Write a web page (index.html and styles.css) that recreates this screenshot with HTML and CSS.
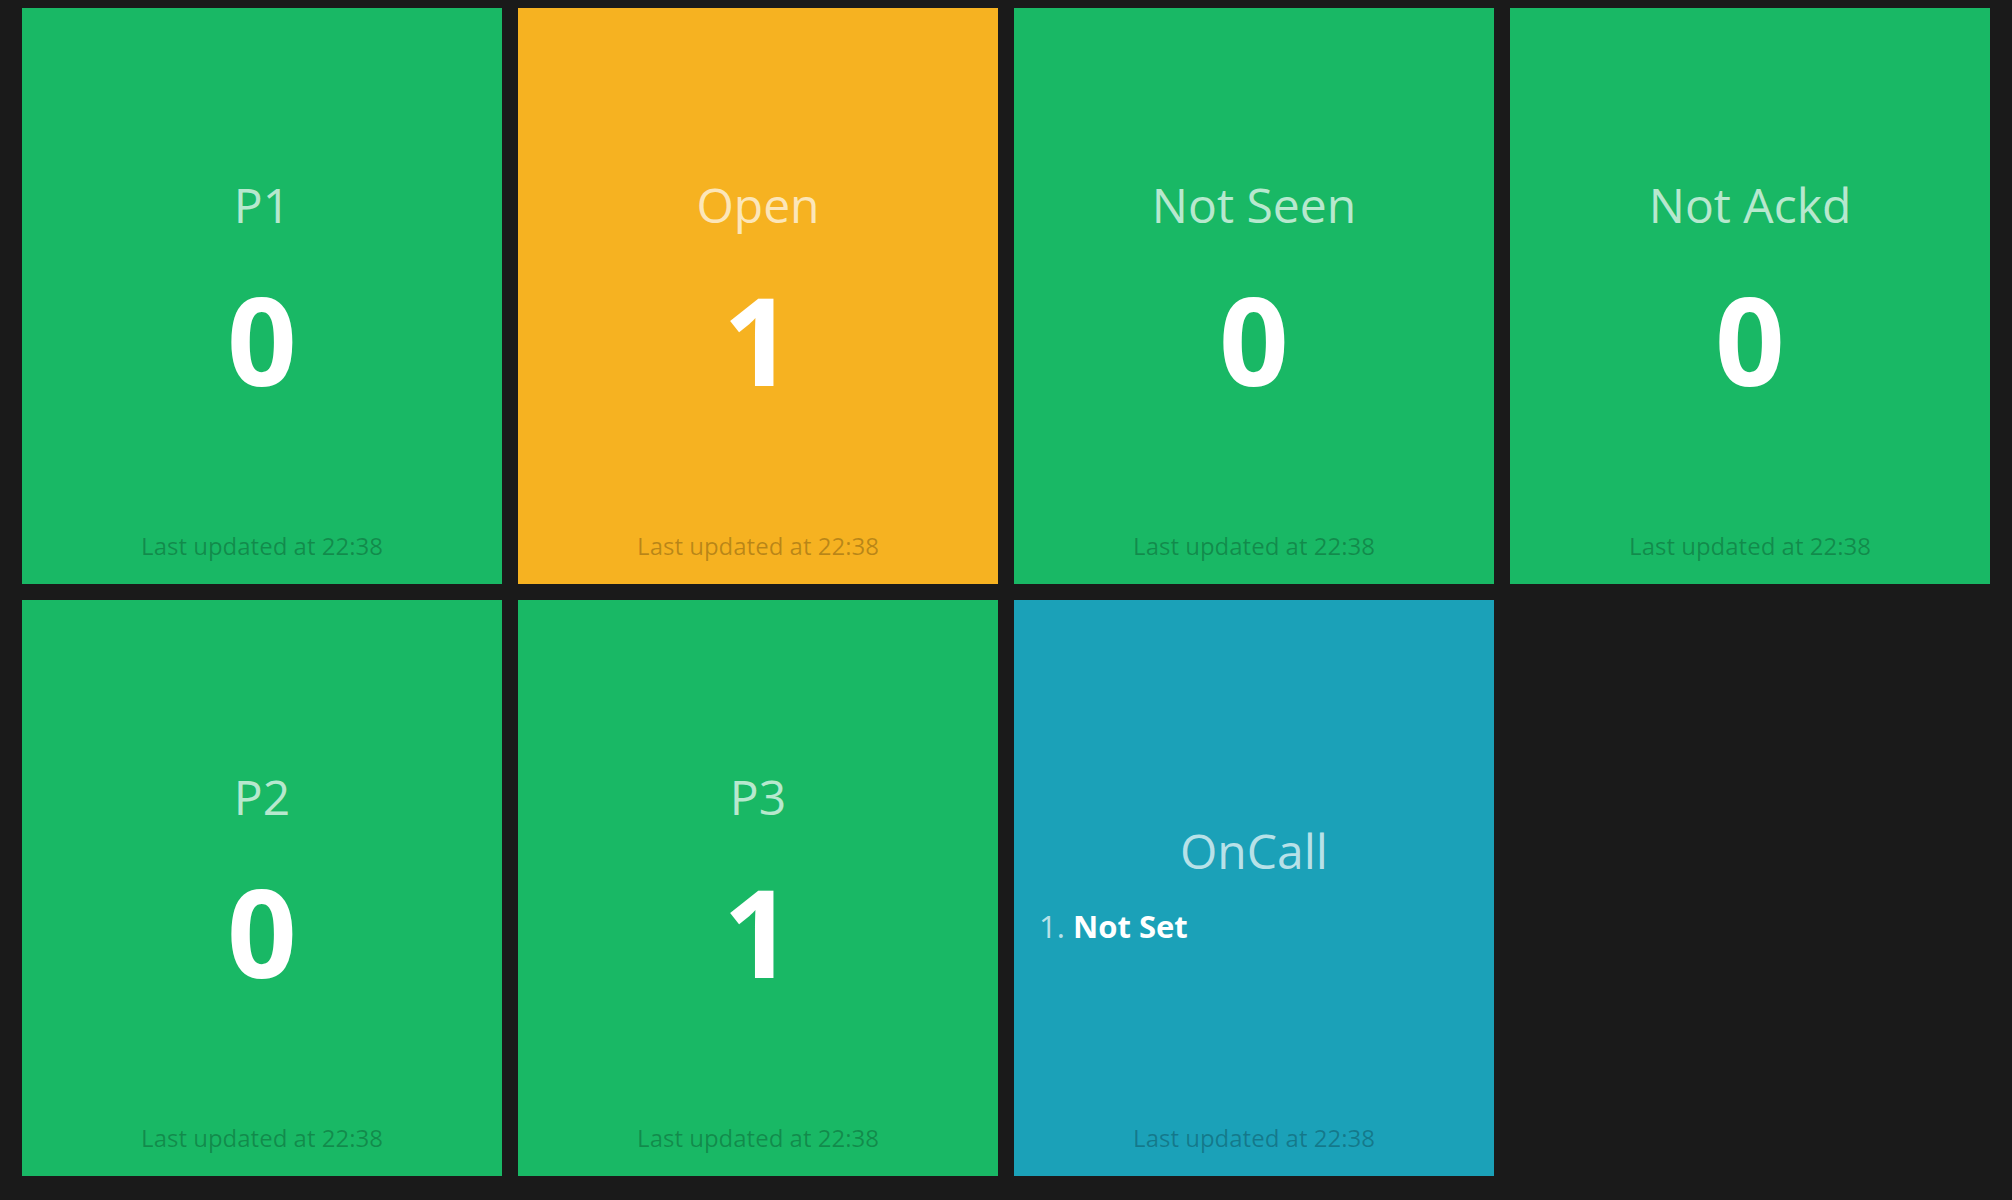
FILE: index.html
```html
<!DOCTYPE html>
<html>
<head>
<meta charset="utf-8">
<link rel="stylesheet" href="styles.css">
</head>
<body>
<div class="board">
  <div class="tile green">
    <div class="body"><div class="title">P1</div><div class="value">0</div></div>
    <div class="footer">Last updated at 22:38</div>
  </div>
  <div class="tile orange">
    <div class="body"><div class="title">Open</div><div class="value">1</div></div>
    <div class="footer">Last updated at 22:38</div>
  </div>
  <div class="tile green">
    <div class="body"><div class="title">Not Seen</div><div class="value">0</div></div>
    <div class="footer">Last updated at 22:38</div>
  </div>
  <div class="tile green">
    <div class="body"><div class="title">Not Ackd</div><div class="value">0</div></div>
    <div class="footer">Last updated at 22:38</div>
  </div>
  <div class="tile green">
    <div class="body"><div class="title">P2</div><div class="value">0</div></div>
    <div class="footer">Last updated at 22:38</div>
  </div>
  <div class="tile green">
    <div class="body"><div class="title">P3</div><div class="value">1</div></div>
    <div class="footer">Last updated at 22:38</div>
  </div>
  <div class="tile blue">
    <div class="body list-body">
      <div class="title">OnCall</div>
      <ol class="oncall"><li><span class="name">Not Set</span></li></ol>
    </div>
    <div class="footer">Last updated at 22:38</div>
  </div>
</div>
</body>
</html>
```
FILE: styles.css
```css
html, body {
  margin: 0;
  padding: 0;
  background: #1a1a1a;
  height: 1200px;
  overflow: hidden;
  font-family: "Open Sans", "Noto Sans", sans-serif;
}
.board {
  display: grid;
  grid-template-columns: repeat(4, 480px);
  grid-auto-rows: 576px;
  column-gap: 16px;
  row-gap: 16px;
  padding: 8px 22px;
}
.tile {
  display: flex;
  flex-direction: column;
  text-align: center;
}
.green { background: #19b865; }
.orange { background: #f6b221; }
.blue { background: #1ba1b8; }
.body {
  flex: 1;
  display: flex;
  flex-direction: column;
  justify-content: center;
  align-items: center;
  padding-top: 49px;
}
.title {
  font-size: 48px;
  line-height: 60px;
  color: rgba(255, 255, 255, 0.7);
}
.value {
  font-size: 122px;
  font-weight: 700;
  line-height: 150px;
  color: #fff;
  margin-top: 29px;
}
.footer {
  font-size: 24px;
  line-height: 30px;
  color: rgba(0, 0, 0, 0.25);
  padding-bottom: 23px;
}
.list-body {
  align-items: stretch;
  padding-top: 45px;
}
.oncall {
  margin: 23px 0 0;
  padding: 0 0 0 59px;
  text-align: left;
  font-size: 31px;
  line-height: 44px;
  color: rgba(255, 255, 255, 0.7);
}
.oncall .name {
  color: #fff;
  font-weight: 700;
}
```
